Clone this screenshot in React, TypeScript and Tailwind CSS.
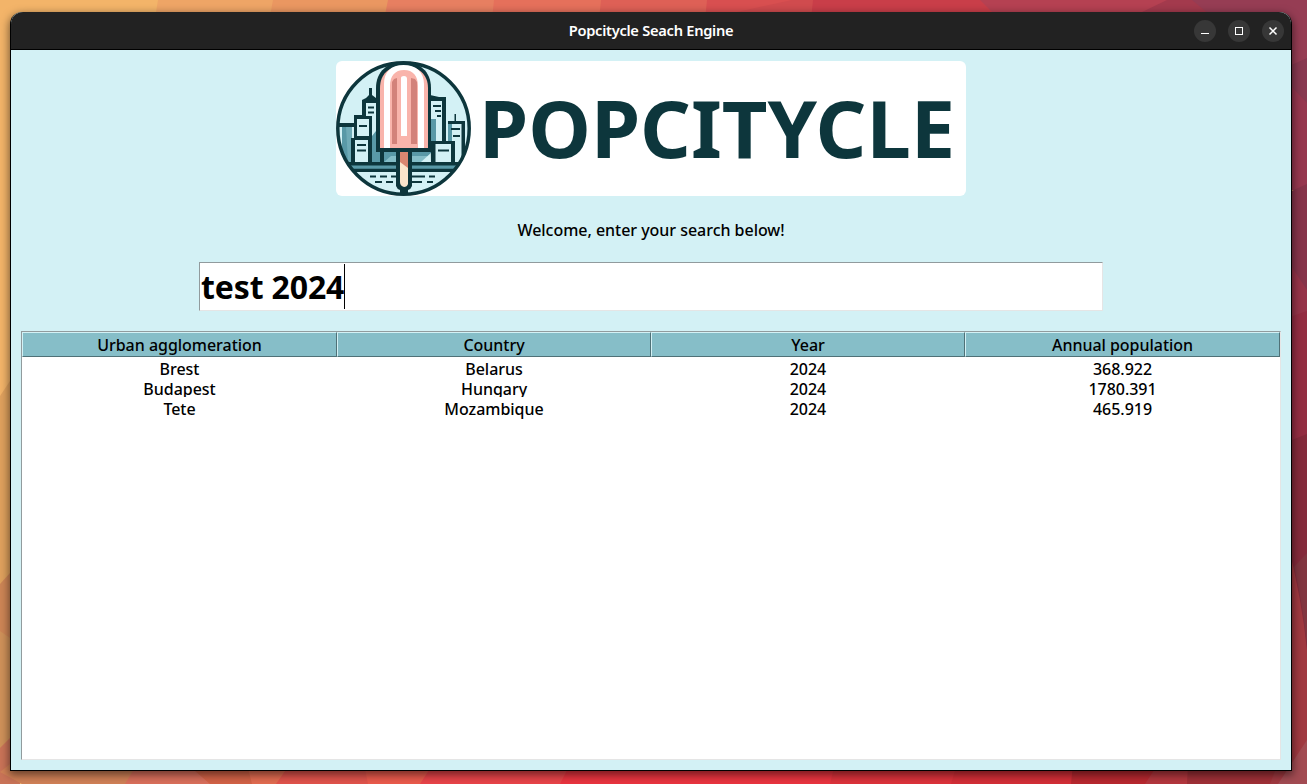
import React from "react";

const columns = ["Urban agglomeration", "Country", "Year", "Annual population"];
const rows = [
  ["Brest", "Belarus", "2024", "368.922"],
  ["Budapest", "Hungary", "2024", "1780.391"],
  ["Tete", "Mozambique", "2024", "465.919"],
];

function Wallpaper() {
  return (
    <svg className="absolute inset-0" width="1307" height="784" viewBox="0 0 1307 784">
      <rect width="1307" height="784" fill="#f3b469" />
      <path d="M158 0H1307V60H148Z" fill="#eea566" />
      <path d="M273 0H1307V60H262Z" fill="#ea9761" />
      <path d="M388 0H1307V60H376Z" fill="#e77f61" />
      <path d="M494 0H1307V60H488Z" fill="#e5705b" />
      <path d="M601 0H1307V60H595Z" fill="#de6056" />
      <path d="M707 0H1307V60H701Z" fill="#d84f50" />
      <path d="M792 0H1307V60H700L737 12Z" fill="#d04b4e" />
      <path d="M813 0H1307V60H807Z" fill="#c93e49" />
      <path d="M980 0H1307V60H1040Z" fill="#b54152" />
      <path d="M1167 0H1307V60H1040L1142 12Z" fill="#a33a4d" />
      <path d="M1192 0H1307V65H1270Z" fill="#963d54" />
      <path d="M1287 67L1307 58V104H1287Z" fill="#883950" />
      <path d="M1287 82L1307 103V190H1287Z" fill="#96374f" />
      <path d="M1287 193L1307 184V320H1287Z" fill="#86344a" />
      <path d="M1287 260L1307 290V330H1287Z" fill="#963449" />
      <path d="M1287 318L1307 311V450H1287Z" fill="#932d42" />
      <path d="M1287 442L1307 434V784H1287Z" fill="#842a3b" />
      <path d="M1287 540Q1302 600 1307 650V784H1287Z" fill="#a03940" />
      <path d="M1307 553V645Q1302 600 1294 567Z" fill="#813540" />
      <path d="M0 396L20 366V784H0Z" fill="#dfa15d" />
      <path d="M0 584L20 562V784H0Z" fill="#cd8555" />
      <path d="M0 631L20 645V784H0Z" fill="#cf9159" />
      <path d="M0 748L20 728V784H0Z" fill="#c97357" />
      <path d="M10 764H1307V784H22L0 772Z" fill="#d08056" />
      <path d="M137 764H1307V784H125Z" fill="#d96f5b" />
      <path d="M187 764H1307V784H210Z" fill="#d26246" />
      <path d="M247 764H1307V784H252Z" fill="#e16b50" />
      <path d="M290 764H1307V784H276Z" fill="#e0534b" />
      <path d="M364 764H1307V784H368Z" fill="#ea5a4c" />
      <path d="M433 764H1307V784H420Z" fill="#e84449" />
      <path d="M570 764H1307V784H560Z" fill="#e9343f" />
      <path d="M835 764H1307V784H830Z" fill="#dc323b" />
      <path d="M957 764H1307V784H951Z" fill="#d32e37" />
      <path d="M1073 764H1307V784H1071Z" fill="#b8282f" />
      <path d="M1158 764H1307V784H1145Z" fill="#b4373e" />
      <path d="M1188 764H1307V784H1187Z" fill="#9f3037" />
      <path d="M1287 740H1307V784H1270Z" fill="#a03940" />
      <path d="M1307 740V784H1278Z" fill="#a24b52" />
    </svg>
  );
}

function Emblem() {
  return (
    <svg className="block size-[135px] shrink-0" viewBox="336 61 135 135">
      <defs>
        <clipPath id="disc">
          <circle cx="403.5" cy="128.5" r="66" />
        </clipPath>
      </defs>
      <circle cx="403.5" cy="128.5" r="66" fill="#d3f1f5" />
      <g clipPath="url(#disc)">
        <path d="M342 126H352V163H342Z" fill="#5999a7" />
        <path d="M346 126H352V163H348Z" fill="#85bec8" opacity=".5" />
        <path d="M384 151H432V163H384Z" fill="#85bec8" />
        <path d="M384 151H432L429 156H391L384 162Z" fill="#5999a7" />
        <path d="M421 162L432 152V162Z" fill="#d3f1f5" />
        <g fill="#0d363c">
          <path d="M338 123H354V127H338Z" />
          <path d="M354 115H372V163H351V138H354Z" />
          <path d="M362 104V100L366 98L369 95V88H372V95L376 98V103H366V116H362Z" />
          <path d="M376 98H379V131H376Z" />
          <path d="M430 95L439 97H446V141H455V163H431Z" />
          <path d="M448 124V121H454.500V114H456V121H465V163H454V124Z" />
          <path d="M379 150H384V163H379Z" />
          <path d="M336 162H471V172H336Z" />
        </g>
        <path d="M366 103H376V134L372 138V116H366Z" fill="#d3f1f5" />
        <path d="M372 136L376 131V151H380V162H372Z" fill="#5999a7" />
        <path d="M357 119H369V136H357ZM355 140H368V162H355ZM431 101H442V141H431ZM452 124H461.500V162H455V141H452ZM435.500 144H451V162H435.500Z" fill="#d3f1f5" />
        <path d="M431 119H436V141H431ZM448 124H452V141H448Z" fill="#5999a7" />
        <path d="M349 165.500H458L455 168.700H352Z" fill="#5999a7" />
        <path d="M354 172H454L471 178V196H336V178Z" fill="#d3f1f5" />
        <path d="M368 107.500H374M368 112.500H374M359 126H367M357 145H366M357 150.500H366M433 106H441M435 111H441M437 116H441M451 129H460M453 136H460M438 150.500H449M370 176.500H376M380 176.500H387M391 176.500H397M411 176.500H425M429 176.500H435M375 182H382M386 182H393M411 182H422M427 182H433" stroke="#0d363c" strokeWidth="2" fill="none" />
      </g>
      <circle cx="403.500" cy="128.500" r="65.700" fill="none" stroke="#0d363c" strokeWidth="3.500" />
      <path d="M396 150H412V186Q411 189 408 190V195H400V190Q397 189 396 186Z" fill="#0d363c" />
      <path d="M400 152H408V184Q407 187 404 187Q400 186 400 182Z" fill="#fae4cb" />
      <path d="M400 152H408V168L400 162Z" fill="#d98670" />
      <path d="M376 152V88C376 71 388 62 403.500 62S431 71 431 88V152Z" fill="#0d363c" />
      <path d="M380 148V88C380 74 389 66 403.500 66S428 74 428 88V148Z" fill="#f9b4ab" />
      <path d="M384 148V84C384 72 391 65 403.500 65S424 72 424 84V148H418V86C418 76 413 70 404 70S390 76 390 86V148Z" fill="#fff" />
      <path d="M392 144V82L394 79L397 78V144ZM411 144V78L415 79L417 82V144Z" fill="#d3827a" />
      <path d="M401 136V78Q401 76 404 76Q407 76 407 79V136Z" fill="#fff" />
    </svg>
  );
}

function WindowButton({ children }: { children: React.ReactNode }) {
  return (
    <button className="grid size-[22px] place-items-center rounded-full bg-[#373737]">
      <svg width="22" height="22" viewBox="0 0 22 22" fill="none" stroke="#fff" shapeRendering="crispEdges">
        {children}
      </svg>
    </button>
  );
}

function TitleBar() {
  return (
    <header className="grid h-[38px] shrink-0 grid-cols-[1fr_auto_1fr] items-center rounded-t-[12px] border-b border-black bg-[#222] px-[7px]">
      <span />
      <h1 className="pb-[2px] text-[14.67px] leading-5 font-semibold tracking-[-0.28px] text-white">Popcitycle Seach Engine</h1>
      <div className="flex justify-end gap-3">
        <WindowButton>
          <path d="M7 13.500H15" />
        </WindowButton>
        <WindowButton>
          <path d="M7.500 7.500H14.500V14.500H7.500Z" />
        </WindowButton>
        <WindowButton>
          <path d="M7.500 7.500L14.500 14.500M14.500 7.500L7.500 14.500" strokeWidth="1.500" shapeRendering="auto" />
        </WindowButton>
      </div>
    </header>
  );
}

function ResultsTable() {
  return (
    <div className="mx-[10px] mt-5 mb-[10px] flex grow flex-col border border-t-[#919b9d] border-r-[#e5e5e5] border-b-[#e5e5e5] border-l-[#919b9d] bg-white">
      <div className="grid h-[25px] shrink-0 grid-cols-[315px_314px_314px_315px]">
        {columns.map((c) => (
          <div key={c} className="h-[25px] border border-t-[#d3f1f5] border-r-[#4f7177] border-b-[#4f7177] border-l-[#d3f1f5] bg-[#86bec8] text-center leading-[24px]">
            {c}
          </div>
        ))}
      </div>
      <div>
        {rows.map((r) => (
          <div key={r[0]} className="grid h-5 grid-cols-[315px_314px_314px_315px] overflow-hidden text-center leading-[24px] last:overflow-visible">
            {r.map((v, i) => (
              <span key={i}>{v}</span>
            ))}
          </div>
        ))}
      </div>
    </div>
  );
}

export default function App() {
  return (
    <div className="relative h-[784px] w-[1307px] overflow-hidden pt-[12px] pl-[10px] font-['Noto_Sans',sans-serif] text-[16px] font-medium tracking-[-0.03px] text-black">
      <Wallpaper />
      <main className="relative flex h-[759px] w-[1282px] flex-col rounded-t-[12px] border border-t-0 border-black bg-[#d3f1f5] shadow-[0_3px_9px_1px_rgba(0,0,0,0.5)]">
        <TitleBar />
        <div className="mt-[11px] ml-[325px] flex h-[135px] w-[630px] shrink-0 items-center rounded-[6px] bg-white">
          <Emblem />
          <span className="ml-[8px] pb-[3px] text-[79.3px] leading-[132px] font-bold text-[#0d363c]">POPCITYCLE</span>
        </div>
        <p className="mt-[22px] h-6 text-center leading-6">Welcome, enter your search below!</p>
        <div className="mt-5 ml-[188px] flex h-[49px] w-[904px] shrink-0 items-center border border-t-[#919b9d] border-r-[#e5e5e5] border-b-[#e5e5e5] border-l-[#919b9d] bg-white pl-px">
          <span className="text-[32px] leading-[46px] font-bold tracking-[-0.14px]">test 2024</span>
          <span className="h-[45px] w-px bg-black" />
        </div>
        <ResultsTable />
      </main>
    </div>
  );
}
